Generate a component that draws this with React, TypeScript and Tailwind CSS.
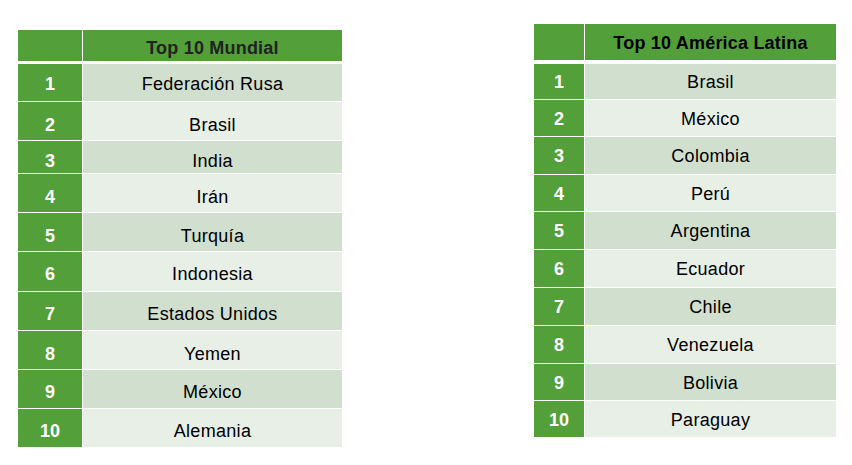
import React from 'react';

interface RankRow {
  rank: number;
  country: string;
  h: string;
  pad: string;
}

// row heights include the 1px white divider under each row
const mundial: RankRow[] = [
  { rank: 1, country: 'Federación Rusa', h: 'h-[38px]', pad: 'pt-[4px]' },
  { rank: 2, country: 'Brasil', h: 'h-[39px]', pad: 'pt-[8px]' },
  { rank: 3, country: 'India', h: 'h-[33px]', pad: 'pt-[8px]' },
  { rank: 4, country: 'Irán', h: 'h-[39px]', pad: 'pt-[8px]' },
  { rank: 5, country: 'Turquía', h: 'h-[39px]', pad: 'pt-[8px]' },
  { rank: 6, country: 'Indonesia', h: 'h-[40px]', pad: 'pt-[6px]' },
  { rank: 7, country: 'Estados Unidos', h: 'h-[39px]', pad: 'pt-[6px]' },
  { rank: 8, country: 'Yemen', h: 'h-[39px]', pad: 'pt-[8px]' },
  { rank: 9, country: 'México', h: 'h-[39px]', pad: 'pt-[6px]' },
  { rank: 10, country: 'Alemania', h: 'h-[39px]', pad: 'pt-[6px]' },
];

const latina: RankRow[] = [
  { rank: 1, country: 'Brasil', h: 'h-[36px]', pad: 'pt-[2px]' },
  { rank: 2, country: 'México', h: 'h-[37px]', pad: 'pt-[2px]' },
  { rank: 3, country: 'Colombia', h: 'h-[38px]', pad: 'pt-[2px]' },
  { rank: 4, country: 'Perú', h: 'h-[37px]', pad: 'pt-[2px]' },
  { rank: 5, country: 'Argentina', h: 'h-[38px]', pad: 'pt-[2px]' },
  { rank: 6, country: 'Ecuador', h: 'h-[38px]', pad: 'pt-[2px]' },
  { rank: 7, country: 'Chile', h: 'h-[38px]', pad: 'pt-[2px]' },
  { rank: 8, country: 'Venezuela', h: 'h-[38px]', pad: 'pt-[2px]' },
  { rank: 9, country: 'Bolivia', h: 'h-[37px]', pad: 'pt-[2px]' },
  { rank: 10, country: 'Paraguay', h: 'h-[37px]', pad: 'pt-[2px]' },
];

interface RankTableProps {
  title: string;
  rows: RankRow[];
  numWidth: string;
  bodyWidth: string;
  headerClass: string;
  titleClass: string;
}

const RankTable: React.FC<RankTableProps> = ({ title, rows, numWidth, bodyWidth, headerClass, titleClass }) => {
  return (
    <div className="flex flex-col">
      <div className={`flex ${headerClass}`}>
        <div className={`${numWidth} bg-[#53a03a]`}></div>
        <div className={`${bodyWidth} ml-[1px] bg-[#53a03a] flex items-center justify-center text-[18px] font-bold tracking-[0.2px] ${titleClass}`}>
          {title}
        </div>
      </div>
      <div className="flex flex-col">
        {rows.map((row, i) => (
          <div key={row.rank} className={`flex ${row.h} border-b border-white`}>
            <div className={`${numWidth} ${row.pad} bg-[#53a03a] flex items-center justify-center text-[18px] font-bold text-white`}>
              {row.rank}
            </div>
            <div
              className={`${bodyWidth} ${row.pad} ml-[1px] flex items-center justify-center text-[18px] tracking-[0.3px] text-black ${
                i % 2 === 0 ? 'bg-[#d1dfce]' : 'bg-[#e8efe7]'
              }`}
            >
              {row.country}
            </div>
          </div>
        ))}
      </div>
    </div>
  );
};

export default function App() {
  return (
    <div className="w-[852px] h-[465px] bg-white flex items-start pl-[18px] font-['Liberation_Sans',Arial,sans-serif]">
      <div className="mt-[30px]">
        <RankTable
          title="Top 10 Mundial"
          rows={mundial}
          numWidth="w-[64px]"
          bodyWidth="w-[259px]"
          headerClass="h-[31px] mb-[3px]"
          titleClass="text-[#222222] pt-[6px]"
        />
      </div>
      <div className="mt-[24px] ml-[192px]">
        <RankTable
          title="Top 10 América Latina"
          rows={latina}
          numWidth="w-[50px]"
          bodyWidth="w-[251px]"
          headerClass="h-[36px] mb-[4px]"
          titleClass="text-black pt-[2px]"
        />
      </div>
    </div>
  );
}
